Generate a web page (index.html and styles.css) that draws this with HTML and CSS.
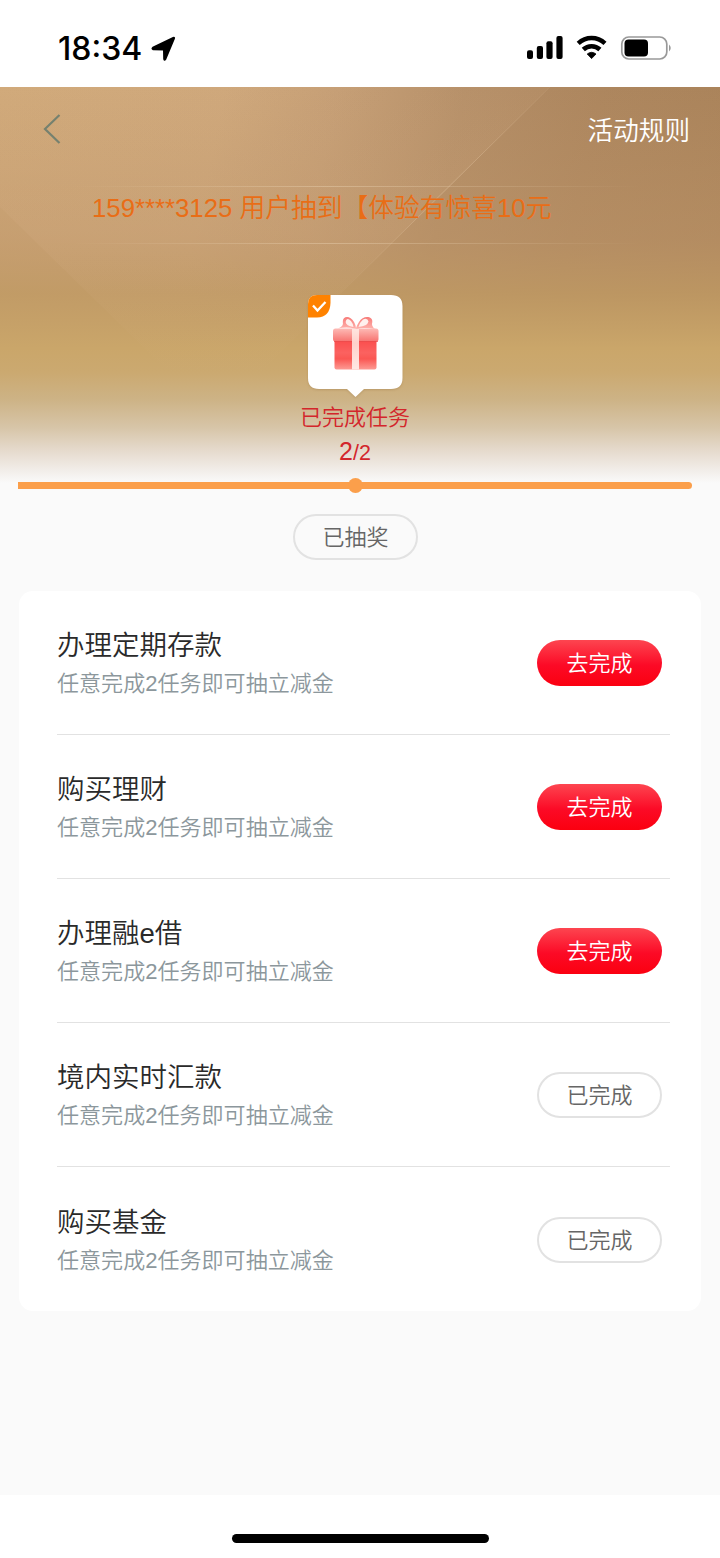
FILE: index.html
```html
<!DOCTYPE html>
<html lang="zh-CN">
<head>
<meta charset="utf-8">
<title>活动</title>
<link rel="stylesheet" href="styles.css">
</head>
<body>
<div class="screen">
  <header class="status">
    <div class="status-left">
      <span class="time">18:34</span>
      <svg class="loc" width="26" height="26" viewBox="0 0 26 26"><path d="M23 2.400 L14.200 23.300 Q13.500 24.300 13.200 23 L13 14.200 Q12.900 13.700 12.400 13.600 L2.300 13.300 Q0.800 12.700 2 11.700 L22.300 1.900 Q23.400 1.500 23 2.400Z" stroke="#000" stroke-width="2" stroke-linejoin="round"/></svg>
    </div>
    <svg class="status-icons" width="146" height="28" viewBox="0 0 146 28">
      <rect x="1" y="16.200" width="6" height="8.800" rx="2"/>
      <rect x="10.800" y="12" width="6.200" height="13" rx="2"/>
      <rect x="20.400" y="7.200" width="6.200" height="17.800" rx="2"/>
      <rect x="30.400" y="2" width="6.200" height="23" rx="2"/>
      <g fill="none" stroke="#000" stroke-width="4.500">
        <path d="M52.200 9.300 C60 2.300 71.200 2.300 79 9.300"/>
        <path d="M57.300 15.500 C62 11 69.200 11 73.900 15.500"/>
      </g>
      <path d="M61.200 20 Q65.600 16.600 70 20 L65.600 24.600Z" stroke="#000" stroke-width=".8"/>
      <rect x="95.800" y="3" width="45" height="22" rx="7" fill="none" stroke="#999" stroke-width="1.700"/>
      <rect x="98.500" y="5.600" width="23.500" height="16.800" rx="4"/>
      <path d="M143 10.500 Q146.500 14 143 17.500Z" fill="#999"/>
    </svg>
  </header>

  <section class="hero">
    <svg class="facets" width="720" height="396" viewBox="0 0 720 396" preserveAspectRatio="none">
      <defs>
        <linearGradient id="base" x1="0" y1="0" x2="720" y2="150" gradientUnits="userSpaceOnUse">
          <stop offset="0" stop-color="#d0a979"/><stop offset=".3" stop-color="#cea77a"/><stop offset=".45" stop-color="#c49d74"/><stop offset=".62" stop-color="#b38d66"/><stop offset=".8" stop-color="#ad865e"/><stop offset="1" stop-color="#aa835a"/>
        </linearGradient>
        <linearGradient id="fade" x1="0" y1="0" x2="0" y2="396" gradientUnits="userSpaceOnUse">
          <stop offset="0" stop-color="#bd956a" stop-opacity="0"/><stop offset=".38" stop-color="#bd9568" stop-opacity=".5"/><stop offset=".52" stop-color="#bf9963" stop-opacity=".85"/><stop offset=".66" stop-color="#caa66a"/><stop offset=".72" stop-color="#cba970"/><stop offset=".79" stop-color="#cdb386"/><stop offset=".86" stop-color="#d7c5a8"/><stop offset=".92" stop-color="#e6dbce"/><stop offset=".97" stop-color="#f2eeea"/><stop offset="1" stop-color="#fafafa"/>
        </linearGradient>
        <linearGradient id="edge" x1="550" y1="0" x2="340" y2="207" gradientUnits="userSpaceOnUse">
          <stop offset="0" stop-color="#dcbd99" stop-opacity=".1"/><stop offset=".5" stop-color="#dcbd99" stop-opacity=".55"/><stop offset="1" stop-color="#dcbd99" stop-opacity="0"/>
        </linearGradient>
        <linearGradient id="facet" x1="0" y1="0" x2="0" y2="290" gradientUnits="userSpaceOnUse">
          <stop offset="0" stop-color="#d9b28a" stop-opacity=".1"/><stop offset=".5" stop-color="#d9b28a" stop-opacity=".16"/><stop offset="1" stop-color="#d9b28a" stop-opacity="0"/>
        </linearGradient>
      </defs>
      <rect width="720" height="396" fill="url(#base)"/>
      <rect width="720" height="396" fill="url(#fade)"/>
      <path d="M0 0 H550 L260 286 H170 L0 120Z" fill="url(#facet)"/>
      <path d="M550 0 L340 207" stroke="url(#edge)" fill="none"/>
    </svg>
    <div class="nav">
      <svg class="back" width="20" height="32" viewBox="0 0 20 32"><path d="M17.500 2 L3 16 L17.500 30" fill="none" stroke="#75816f" stroke-width="2.200"/></svg>
      <span class="rules">活动规则</span>
    </div>
    <div class="ticker">159****3125 用户抽到【体验有惊喜10元</div>
    <div class="reward">
      <svg class="gift" width="110" height="112" viewBox="0 0 110 112">
        <defs>
          <linearGradient id="box" x1="0" y1="0" x2="0" y2="1"><stop offset="0" stop-color="#fb4b4b"/><stop offset=".45" stop-color="#fb6260"/><stop offset=".65" stop-color="#fa5753"/><stop offset="1" stop-color="#fd9b94"/></linearGradient>
          <linearGradient id="lid" x1="0" y1="0" x2="0" y2="1"><stop offset="0" stop-color="#fdbab5"/><stop offset="1" stop-color="#f77370"/></linearGradient>
          <linearGradient id="ribbon" x1="0" y1="0" x2="0" y2="1"><stop offset="0" stop-color="#ffe5df"/><stop offset=".35" stop-color="#ffd1cb"/><stop offset="1" stop-color="#ffe9e4"/></linearGradient>
          <linearGradient id="bow" x1="0" y1="0" x2="0" y2="1"><stop offset="0" stop-color="#f77b78"/><stop offset="1" stop-color="#ffb3ae"/></linearGradient>
        </defs>
        <path class="bubble" d="M17 4 H91 Q102.500 4 102.500 15 V87 Q102.500 98 91 98 H64 L55.500 106 L47 98 H19 Q8 98 8 87 V13 Q8 4 17 4Z" fill="#fff"/>
        <path d="M17 4 H30.500 V12 Q30 26 17 26.500 H8 V13 Q8 4 17 4Z" fill="#ff8200"/>
        <path d="M13 14.500 L17.500 19.500 L25.500 11" fill="none" stroke="#fff" stroke-width="2.300"/>
        <path d="M55 37.500 Q46 35.500 38 37.500 Q44 35 42.800 31 C42.500 25 50 24 54 31 Q56 34.500 56 37 Q57 34 59 31 C63 24 73 25 72.300 31 Q71 35 75 38 Q63 36 57 38Z" fill="url(#bow)"/>
        <path d="M53.500 36 Q46 35 45.600 31 Q46.500 25.500 51 30 Q53 32.500 53.500 36Z M58.500 36 Q59.500 31.500 63 28.500 Q67.500 26.500 68.500 30.500 Q67.500 35 58.500 36Z" fill="#fff0ed"/>
        <rect x="34.500" y="48" width="42" height="30.500" rx="2" fill="url(#box)"/>
        <rect x="33" y="37.500" width="45.500" height="13" rx="2.500" fill="url(#lid)"/>
        <path d="M34 50.500 H78" stroke="#e94142" stroke-width="1" opacity=".65"/>
        <rect x="52" y="38" width="7" height="40.500" fill="url(#ribbon)"/>
      </svg>
      <div class="reward-label">已完成任务</div>
      <div class="reward-count">2<small>/2</small></div>
    </div>
  </section>

  <div class="progress"><i class="dot"></i></div>
  <div class="drawn"><span class="pill">已抽奖</span></div>

  <main class="tasks">
    <div class="task"><div><h2>办理定期存款</h2><p>任意完成2任务即可抽立减金</p></div><span class="pill go">去完成</span></div>
    <div class="task"><div><h2>购买理财</h2><p>任意完成2任务即可抽立减金</p></div><span class="pill go">去完成</span></div>
    <div class="task"><div><h2>办理融e借</h2><p>任意完成2任务即可抽立减金</p></div><span class="pill go">去完成</span></div>
    <div class="task"><div><h2>境内实时汇款</h2><p>任意完成2任务即可抽立减金</p></div><span class="pill">已完成</span></div>
    <div class="task"><div><h2>购买基金</h2><p>任意完成2任务即可抽立减金</p></div><span class="pill">已完成</span></div>
  </main>

  <footer class="home"><i class="home-bar"></i></footer>
</div>
</body>
</html>
```
FILE: styles.css
```css
* { box-sizing: border-box; }
body {
  margin: 0;
  background: #fafafa;
  font-family: "Liberation Sans", "Noto Sans CJK SC", sans-serif;
  font-weight: 350;
}
.screen { width: 720px; height: 1558px; display: flex; flex-direction: column; overflow: hidden; }
.status {
  height: 87px;
  flex: none;
  background: #fff;
  display: flex;
  justify-content: space-between;
  align-items: flex-start;
  padding: 34px 48px 0 58px;
}
.status-left { display: flex; align-items: center; gap: 9px; }
.time { font: 500 32px/28px Inter, sans-serif; padding-top: 1px; }
.hero { position: relative; height: 396px; flex: none; }
.facets { position: absolute; inset: 0; }
.nav {
  position: relative;
  height: 84px;
  padding: 0 30px 0 42px;
  display: flex;
  justify-content: space-between;
  align-items: center;
}
.rules { color: #fff; font-size: 25.6px; line-height: 36px; padding-top: 3px; }
.ticker {
  position: relative;
  margin: 15px 60px 0 92px;
  height: 58px;
  line-height: 44px;
  font-size: 25.75px;
  white-space: nowrap;
  color: #e96d16;
}
.ticker::before {
  content: "";
  position: absolute;
  inset: 0 20px 0 -20px;
  border: solid transparent;
  border-width: 1px 0;
  border-image: linear-gradient(90deg, transparent, rgba(232, 208, 176, .45) 45%, transparent) 1;
}
.reward { position: relative; width: 110px; margin: 47px 0 0 300px; text-align: center; color: #d3262b; }
.gift { display: block; }
.bubble { filter: drop-shadow(0 1px 1px rgba(130, 90, 40, .25)); }
.reward-label { font-size: 22px; line-height: 32px; margin-top: -1px; white-space: nowrap; }
.reward-count { font-size: 25px; line-height: 32px; margin-top: 1px; }
.reward-count small { font-size: 21.500px; }
.progress {
  height: 7px;
  flex: none;
  margin: -1px 28px 0 18px;
  position: relative;
  background: #fb9f4b;
  border-radius: 0 4px 4px 0;
  display: flex;
  align-items: center;
}
.dot { width: 15px; height: 15px; margin-left: 330px; border-radius: 50%; background: #fb9f4b; flex: none; }
.drawn { padding: 25px 0 0 293px; flex: none; }
.pill {
  display: block;
  width: 125px;
  height: 46px;
  flex: none;
  border: 2px solid #e2e2e2;
  border-radius: 23px;
  font-size: 22px;
  line-height: 43px;
  text-align: center;
  color: #666;
}
.pill.go {
  border: 0;
  line-height: 47px;
  color: #fff;
  background: linear-gradient(#fd4550, #fc0a26 55%, #fb0010);
}
.tasks {
  margin: 31px 19px 0;
  height: 720px;
  flex: none;
  background: #fff;
  border-radius: 14px;
  padding: 0 31px 0 38px;
}
.task {
  height: 144px;
  padding: 0 8px 0 0;
  display: flex;
  justify-content: space-between;
  align-items: center;
  border-bottom: 1px solid #e2e2e2;
}
.task:last-child { border: 0; height: 145px; }
.task h2 { margin: 2px 0 0; font-size: 27.500px; line-height: 40px; font-weight: 350; color: #2a2a2a; }
.task p { margin: 0; font-size: 22.05px; line-height: 36px; color: #8c979c; white-space: nowrap; }
.home {
  margin-top: auto;
  height: 63px;
  flex: none;
  background: #fff;
  display: flex;
  justify-content: center;
  padding-top: 39px;
}
.home-bar { width: 257px; height: 9px; border-radius: 5px; background: #000; }
```
